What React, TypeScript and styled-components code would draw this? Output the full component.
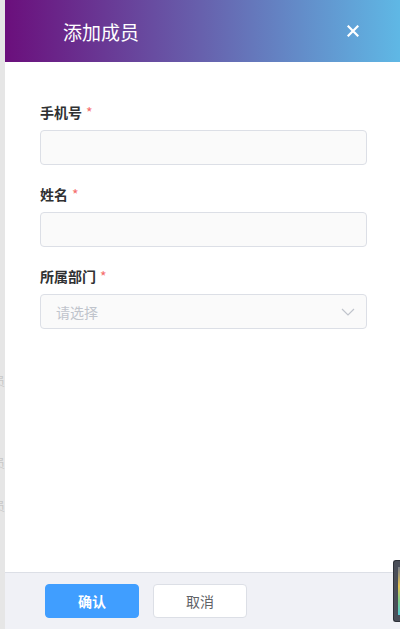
import styled, { createGlobalStyle } from "styled-components";

const GlobalStyle = createGlobalStyle`
  html, body {
    margin: 0;
    padding: 0;
    height: 100%;
    overflow: hidden;
  }
  body {
    font-family: "Noto Sans CJK SC", "Noto Sans", sans-serif;
    background: #e6e6e6;
  }
  #root {
    height: 100%;
  }
`;

const Page = styled.div`
  position: relative;
  display: flex;
  height: 629px;
  background: #e6e6e6;
`;

// strip of the page that lies behind the drawer
const Backdrop = styled.div`
  width: 5px;
  flex-shrink: 0;
  overflow: hidden;
  display: flex;
  flex-direction: column;
`;

const GhostText = styled.span<{ top: number }>`
  font-size: 12px;
  color: #c8c8c8;
  margin-left: -7px;
  margin-top: ${({ top }) => top}px;
  line-height: 14px;
`;

const Drawer = styled.div`
  flex: 1;
  display: flex;
  flex-direction: column;
  background: #fff;
`;

const Header = styled.div`
  height: 62px;
  flex-shrink: 0;
  display: flex;
  align-items: center;
  justify-content: space-between;
  padding: 0 41px 0 58px;
  background: linear-gradient(90deg, #6b0f7c 0%, #6761ad 50%, #5fb8e5 100%);
`;

const Title = styled.h2`
  margin: 0;
  font-size: 19px;
  font-weight: 400;
  color: #fff;
`;

const CloseButton = styled.button`
  border: none;
  background: none;
  padding: 0;
  display: flex;
  cursor: pointer;
`;

const Body = styled.div`
  flex: 1;
  padding: 40px 33px 0 35px;
`;

const FormItem = styled.div`
  margin-bottom: 19px;
`;

const Label = styled.label`
  display: block;
  font-size: 14px;
  font-weight: 700;
  line-height: 20px;
  color: #303133;
  margin-bottom: 8px;
`;

const Required = styled.span`
  color: #f56c6c;
  font-weight: 400;
  margin-left: 4px;
`;

const Input = styled.input`
  box-sizing: border-box;
  width: 100%;
  height: 35px;
  padding: 0 15px;
  border: 1px solid #dcdfe6;
  border-radius: 4px;
  background: #fafafa;
  font-family: inherit;
  font-size: 14px;
  color: #606266;
  outline: none;

  &::placeholder {
    color: #c0c4cc;
  }
`;

const SelectBox = styled.div`
  position: relative;
`;

const Arrow = styled.svg`
  position: absolute;
  right: 12px;
  top: 50%;
  transform: translateY(-50%);
  pointer-events: none;
`;

const Footer = styled.div`
  height: 56px;
  flex-shrink: 0;
  border-top: 1px solid #dcdfe6;
  background: #f0f1f6;
  display: flex;
  align-items: center;
  gap: 14px;
  padding: 0 0 0 40px;
`;

const Button = styled.button<{ primary?: boolean }>`
  width: 94px;
  height: 34px;
  border-radius: 4px;
  font-family: inherit;
  font-size: 14px;
  cursor: pointer;
  border: 1px solid ${({ primary }) => (primary ? "#409eff" : "#dcdfe6")};
  background: ${({ primary }) => (primary ? "#409eff" : "#fff")};
  color: ${({ primary }) => (primary ? "#fff" : "#606266")};
  font-weight: ${({ primary }) => (primary ? 700 : 400)};
`;

// little dev widget that sticks out on the right edge
const SideWidget = styled.div`
  position: absolute;
  right: 0;
  top: 560px;
  width: 6px;
  height: 60px;
  background: #4a4e58;
  border-radius: 3px 0 0 3px;
  border: 1px solid #2e3138;
  border-right: none;
  overflow: hidden;

  &::after {
    content: "";
    position: absolute;
    right: 0;
    top: 6px;
    width: 2px;
    height: 48px;
    background: linear-gradient(180deg, #7a7f8a 0%, #e5c453 40%, #7fd08a 70%, #55c9d6 100%);
  }
`;

export default function App() {
  return (
    <>
      <GlobalStyle />
      <Page>
        <Backdrop aria-hidden="true">
          <GhostText top={374}>员</GhostText>
          <GhostText top={68}>员</GhostText>
          <GhostText top={29}>员</GhostText>
        </Backdrop>
        <Drawer>
          <Header>
            <Title>添加成员</Title>
            <CloseButton aria-label="close">
              <svg width="12" height="12" viewBox="0 0 12 12">
                <path d="M1.5 1.5 L10.5 10.5 M10.5 1.5 L1.5 10.5" stroke="#fff" strokeWidth="2.2" strokeLinecap="square" />
              </svg>
            </CloseButton>
          </Header>
          <Body>
            <FormItem>
              <Label>
                手机号<Required>*</Required>
              </Label>
              <Input />
            </FormItem>
            <FormItem>
              <Label>
                姓名<Required>*</Required>
              </Label>
              <Input />
            </FormItem>
            <FormItem>
              <Label>
                所属部门<Required>*</Required>
              </Label>
              <SelectBox>
                <Input placeholder="请选择" readOnly />
                <Arrow width="14" height="8" viewBox="0 0 14 8">
                  <path d="M1 1 L7 7 L13 1" fill="none" stroke="#c0c4cc" strokeWidth="1.2" />
                </Arrow>
              </SelectBox>
            </FormItem>
          </Body>
          <Footer>
            <Button primary>确认</Button>
            <Button>取消</Button>
          </Footer>
        </Drawer>
        <SideWidget />
      </Page>
    </>
  );
}
